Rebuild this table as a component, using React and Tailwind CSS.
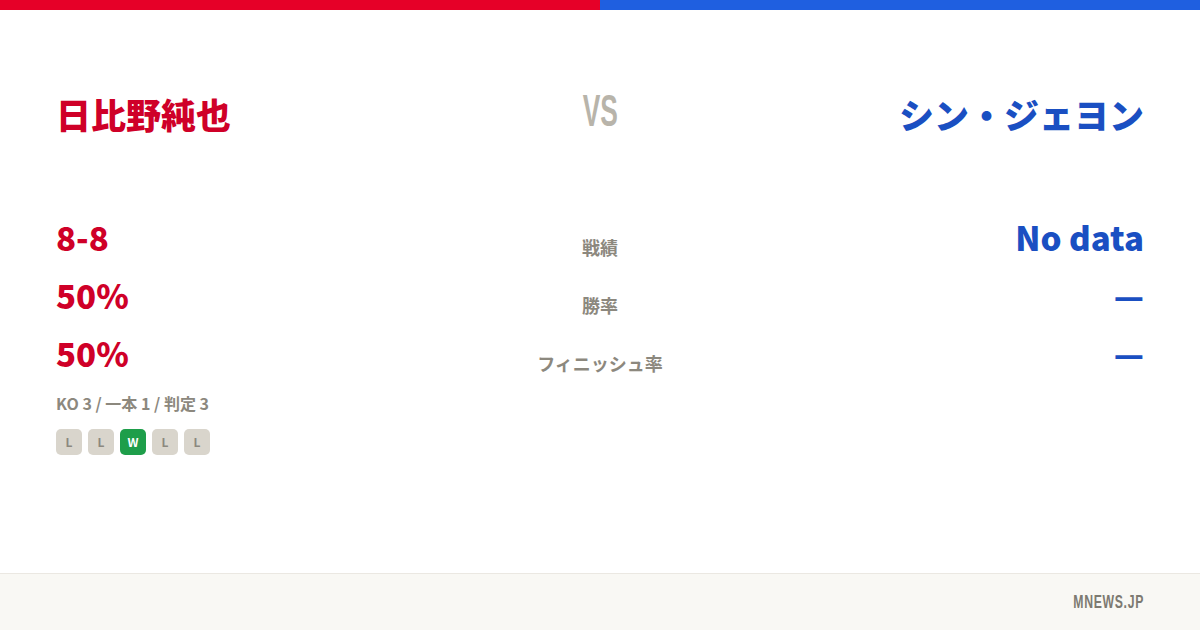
export default function App() {
  const form = ["L", "L", "W", "L", "L"];
  const rows = [
    { left: "8-8", label: "戦績", right: "No data" },
    { left: "50%", label: "勝率", right: "—" },
    { left: "50%", label: "フィニッシュ率", right: "—" },
  ];

  return (
    <div className="w-[1200px] h-[630px] bg-white flex flex-col font-['Noto_Sans_CJK_JP',sans-serif]">
      {/* Corner colours */}
      <div className="flex h-[10px]">
        <div className="flex-1 bg-[#e60028]" />
        <div className="flex-1 bg-[#1f5fe0]" />
      </div>

      <div className="flex-1 px-14">
        {/* Fighters */}
        <div className="grid grid-cols-[1fr_auto_1fr] items-center pt-[82px]">
          <h1 className="text-[35px] font-black leading-[44px] text-[#cf0028]">日比野純也</h1>
          <div className="font-['Liberation_Sans',sans-serif] font-bold text-[44px] leading-[44px] text-[#b8b4aa] scale-x-[0.6] -mt-[6px]">
            VS
          </div>
          <h1 className="text-[35px] font-black leading-[44px] text-[#1a4fc2] text-right">シン・ジェヨン</h1>
        </div>

        {/* Stats */}
        <div className="mt-[81px]">
          {rows.map((r) => (
            <div key={r.label} className="grid grid-cols-[1fr_auto_1fr] items-baseline h-[58px]">
              <div className="text-[33px] font-black leading-[40px] text-[#cf0028]">{r.left}</div>
              <div className="text-[18px] font-bold text-[#8c887e] translate-y-[4px]">{r.label}</div>
              <div className="text-[33px] font-black leading-[40px] text-[#1a4fc2] text-right">{r.right}</div>
            </div>
          ))}
        </div>

        <p className="text-[16px] font-bold text-[#8c887e] leading-6">KO 3 / 一本 1 / 判定 3</p>
        <div className="flex gap-[6px] mt-[14px]">
          {form.map((f, i) => (
            <span
              key={i}
              className={
                f === "W"
                  ? "w-[26px] h-[26px] rounded-[5px] bg-[#1e9e4a] text-white text-[12px] font-bold flex items-center justify-center"
                  : "w-[26px] h-[26px] rounded-[5px] bg-[#d9d5cc] text-[#8c887e] text-[12px] font-bold flex items-center justify-center"
              }
            >
              {f}
            </span>
          ))}
        </div>
      </div>

      {/* Footer */}
      <div className="h-[57px] bg-[#f9f8f4] border-t border-[#ebe8e2] flex items-center justify-end px-14">
        <span className="font-['Liberation_Sans',sans-serif] font-bold text-[18px] tracking-[1px] text-[#7d7a71] scale-x-[0.68] origin-right">
          MNEWS.JP
        </span>
      </div>
    </div>
  );
}
